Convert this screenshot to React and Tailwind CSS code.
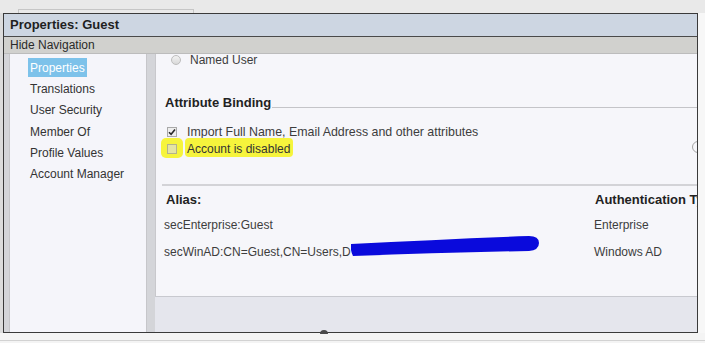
import React from "react";

const font = { fontFamily: '"Liberation Sans", Arial, sans-serif' };

function NavItem({ label, active }) {
  return (
    <div className="h-[19px] flex items-center mb-[2.4px]">
      <span
        className={
          active
            ? "bg-[#7dc2ea] text-white px-[2px] h-[19px] flex items-center"
            : "text-[#333333] px-[2px]"
        }
      >
        {label}
      </span>
    </div>
  );
}

export default function App() {
  return (
    <div className="w-[705px] h-[343px] overflow-hidden flex flex-col bg-[#f2f2f2] text-[12px]" style={font}>
      {/* top strip */}
      <div className="h-[13px] bg-[#e9e9e9] pl-[18px] pt-[9px] shrink-0">
        <div className="w-[176px] h-[4px] border-t border-l border-r border-[#c6c6c6]" />
      </div>

      <div className="flex shrink-0">
        <div className="w-[3px] bg-[#dcdcdc]" />
        {/* dialog */}
        <div className="w-[695px] h-[320px] border border-[#3a3a3a] flex flex-col bg-[#d4d5d9] relative">
          <div className="h-[23px] bg-[#cdd6e2] border-b border-[#4a4a4a] pl-[6px] flex items-center font-bold text-[13px] text-[#1f1f1f]">
            Properties: Guest
          </div>
          <div className="h-[17px] bg-[#d1d1ce] border-b border-[#bcbcbc] pl-[6px] flex items-center text-[12px] text-[#2a2a2a]">
            Hide Navigation
          </div>
          <div className="flex-1 flex pl-[5px] min-h-0">
            {/* nav */}
            <div className="w-[138px] bg-[#f5f5fa] border-x border-[#c6c6ca] pt-[4px] pl-[18px] text-[12px]">
              <NavItem label="Properties" active />
              <NavItem label="Translations" />
              <NavItem label="User Security" />
              <NavItem label="Member Of" />
              <NavItem label="Profile Values" />
              <NavItem label="Account Manager" />
            </div>
            <div className="w-[8px]" />
            {/* content column */}
            <div className="flex-1 flex flex-col min-w-0">
              <div className="flex-1 bg-[#f6f6fa] border-l border-[#c8c8cc] relative overflow-hidden flex flex-col text-[#3d3d3d] whitespace-nowrap">
                {/* partial clipped circle at right edge */}
                <div className="absolute left-[536px] top-[87px] w-[12px] h-[12px] rounded-full border-[1.5px] border-[#a5a5a5]" />

                {/* Named User */}
                <div className="h-[11px] pl-[15px] flex items-center gap-[9px] leading-none">
                  <div className="w-[10px] h-[10px] rounded-full border border-[#bdbdbd] bg-gradient-to-b from-[#f2f2f2] to-[#d9d9d9]" />
                  <span>Named User</span>
                </div>

                {/* Attribute Binding */}
                <div className="h-[14px] mt-[31px] pl-[9px] flex items-center">
                  <span className="font-bold text-[13px] text-[#222222]">Attribute Binding</span>
                  <div className="flex-1 h-px bg-[#c4c4c8] self-end mb-[2px] ml-[1px]" />
                </div>

                {/* Import */}
                <div className="h-[12px] mt-[16px] pl-[11px] flex items-center gap-[10px]">
                  <div className="w-[10px] h-[10px] border border-[#a9a9a9] bg-[#eeeeee] flex items-center justify-center">
                    <svg width="8" height="8" viewBox="0 0 8 8">
                      <path d="M1 4.2 L3.1 6.3 L7 1.5" fill="none" stroke="#2a2a2a" strokeWidth="1.6" />
                    </svg>
                  </div>
                  <span className="text-[12.4px]">Import Full Name, Email Address and other attributes</span>
                </div>

                {/* Account is disabled */}
                <div className="h-[12px] mt-[5px] pl-[11px] flex items-center gap-[10px] relative">
                  <div className="absolute left-[5px] top-[-5px] w-[22px] h-[20px] rounded-[5px] bg-[#f6f43c]" />
                  <div className="absolute left-[29px] top-[-5px] w-[108px] h-[19px] rounded-[4px] bg-[#f6f43c]" />
                  <div className="relative w-[10px] h-[10px] border border-[#b3b38c] bg-[#e4e4a4]" />
                  <span className="relative text-[#333333]">Account is disabled</span>
                </div>

                {/* separator */}
                <div className="h-[2px] mt-[29px] ml-[6px] bg-[#d3d3d7]" />

                {/* table header */}
                <div className="h-[14px] mt-[7px] flex items-center font-bold text-[13px] text-[#222222]">
                  <div className="w-[438px] shrink-0 pl-[10px]">Alias:</div>
                  <div className="shrink-0 pl-[1px]">Authentication Type</div>
                </div>
                <div className="h-[14px] mt-[11px] flex items-center">
                  <div className="w-[438px] shrink-0 pl-[8px]">secEnterprise:Guest</div>
                  <div className="shrink-0">Enterprise</div>
                </div>
                <div className="h-[14px] mt-[13px] flex items-center">
                  <div className="w-[438px] shrink-0 pl-[8px] relative">
                    secWinAD:CN=Guest,CN=Users,D
                    <svg className="absolute left-[195px] top-[-8px]" width="188" height="22" viewBox="0 0 188 22">
                      <path
                        d="M0 9 C 60 6 120 3 178 1 Q 188 1 188 8 Q 188 15 178 16 C 120 17 60 19 2 21 Q -1 15 0 9 Z"
                        fill="#0a0adc"
                      />
                    </svg>
                  </div>
                  <div className="shrink-0">Windows AD</div>
                </div>
              </div>
              <div className="h-[36px] bg-[#e5e6ed] border-t border-[#c8c9cf]" />
            </div>
          </div>
          <div className="absolute left-[316px] bottom-[-2px] w-[8px] h-[4px] rounded-t-full bg-[#4a4a4a]" />
        </div>
        <div className="flex-1 bg-[#f7f7f7]" />
      </div>

      <div className="flex-1 bg-[#f4f4f4] flex flex-col">
        <div className="h-[7px]" />
        <div className="h-px bg-[#d2d2d2]" />
      </div>
    </div>
  );
}
